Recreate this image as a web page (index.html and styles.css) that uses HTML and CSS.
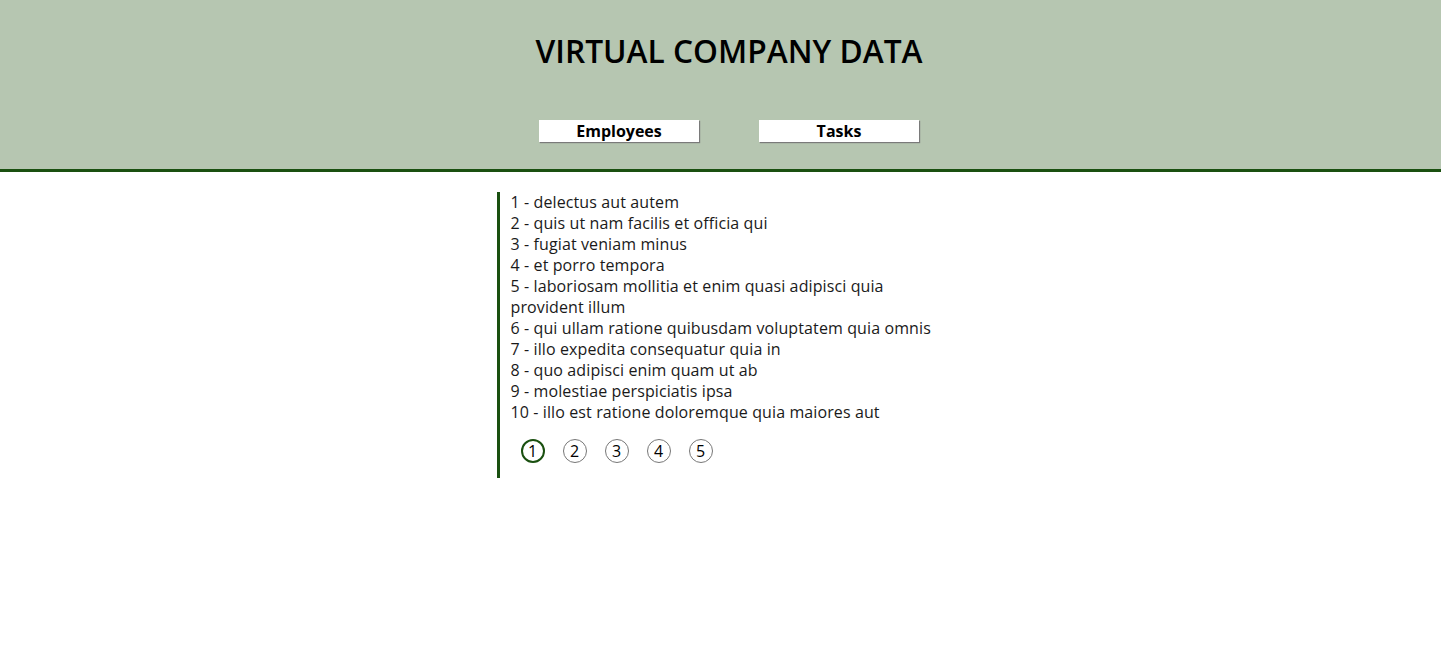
FILE: index.html
```html
<!DOCTYPE html>
<html>
<head>
<meta charset="utf-8">
<link rel="stylesheet" href="styles.css">
</head>
<body>
<header class="header">
  <h1 class="title">VIRTUAL COMPANY DATA</h1>
  <nav class="nav">
    <button class="nav-btn">Employees</button>
    <button class="nav-btn">Tasks</button>
  </nav>
</header>
<main class="main">
  <section class="panel">
    <ul class="list">
      <li>1 - delectus aut autem</li>
      <li>2 - quis ut nam facilis et officia qui</li>
      <li>3 - fugiat veniam minus</li>
      <li>4 - et porro tempora</li>
      <li>5 - laboriosam mollitia et enim quasi adipisci quia provident illum</li>
      <li>6 - qui ullam ratione quibusdam voluptatem quia omnis</li>
      <li>7 - illo expedita consequatur quia in</li>
      <li>8 - quo adipisci enim quam ut ab</li>
      <li>9 - molestiae perspiciatis ipsa</li>
      <li>10 - illo est ratione doloremque quia maiores aut</li>
    </ul>
    <div class="pager">
      <span class="page active">1</span>
      <span class="page">2</span>
      <span class="page">3</span>
      <span class="page">4</span>
      <span class="page">5</span>
    </div>
  </section>
</main>
</body>
</html>
```
FILE: styles.css
```css
* { box-sizing: border-box; }
body {
  margin: 0;
  font-family: "Open Sans", "Noto Sans", sans-serif;
  color: #000;
  background: #fff;
}
.header {
  background: #b6c6b1;
  border-bottom: 3px solid #1a5010;
  height: 172px;
  padding: 30px 0 0 17px;
  display: flex;
  flex-direction: column;
  align-items: center;
}
.title {
  margin: 0;
  font-size: 31.7px;
  font-weight: 600;
  line-height: 42px;
}
.nav {
  display: flex;
  gap: 60px;
  margin-top: 48px;
}
.nav-btn {
  width: 160px;
  height: 22px;
  padding: 0;
  border: none;
  background: #fff;
  box-shadow: 1px 1px 1px #7a7a7a;
  font-family: "Open Sans", "Noto Sans", sans-serif;
  font-size: 16px;
  font-weight: 700;
  line-height: 22px;
  color: #000;
}
.main {
  display: flex;
  justify-content: center;
  padding-top: 20px;
  padding-right: 8px;
}
.panel {
  width: 440px;
  margin-left: 0;
  border-left: 3px solid #1a5010;
  padding: 0 0 15px 11px;
}
.list {
  list-style: none;
  margin: 0;
  padding: 0;
  font-size: 16px;
  line-height: 21px;
  letter-spacing: 0.11px;
  color: #1a1a1a;
}
.pager {
  display: flex;
  gap: 18px;
  padding: 16px 0 0 10px;
}
.page {
  width: 24px;
  height: 24px;
  border: 1px solid #777;
  border-radius: 50%;
  display: flex;
  align-items: center;
  justify-content: center;
  font-size: 16px;
  line-height: 1;
}
.page.active {
  border: 2px solid #1a5010;
}
```
